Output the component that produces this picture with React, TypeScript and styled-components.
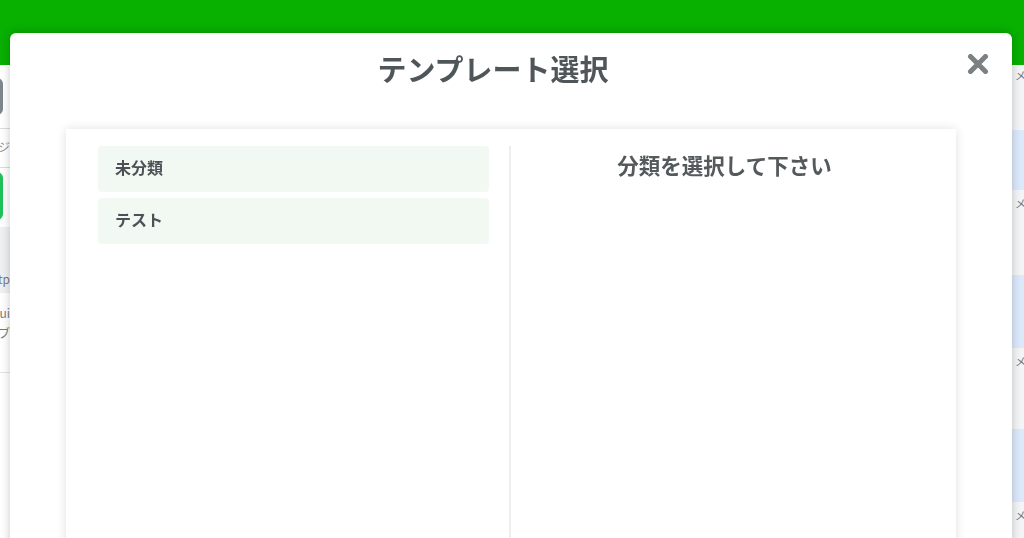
import React from 'react';
import styled, { createGlobalStyle } from 'styled-components';

const categories = ['未分類', 'テスト'];

// chat bubbles peeking out on the right of the background page
const threads = [
  { gap: 47, height: 60 },
  { gap: 64, height: 73 },
  { gap: 60, height: 73 },
  { gap: 0, height: 0 },
];

function CloseIcon() {
  return (
    <svg width="22" height="20" viewBox="0 0 22 20" aria-hidden="true">
      <path
        d="M3.5 2.5 L18.5 17.5 M18.5 2.5 L3.5 17.5"
        stroke="#7b8083"
        strokeWidth="5"
        strokeLinecap="round"
        fill="none"
      />
    </svg>
  );
}

function App() {
  return (
    <>
      <GlobalStyle />
      <StyledPage>
        <StyledHeader />
        <StyledMain>
          <StyledSidebar>
            <StyledSidebarInner>
              <StyledToolButton $color="#7b878d" $top={13} $height={37} />
              <StyledSideLabel>メッセージ</StyledSideLabel>
              <StyledToolButton $color="#20c05a" $top={4} $height={48} />
              <StyledSideRow $active>
                <span>http</span>
              </StyledSideRow>
              <StyledSideRow>
                <span>ui</span>
                <span>ブブ</span>
              </StyledSideRow>
            </StyledSidebarInner>
          </StyledSidebar>
          <StyledCenter />
          <StyledAside>
            <StyledAsideInner>
              {threads.map((t, i) => (
                <div key={i}>
                  <StyledMeta>メッセージ</StyledMeta>
                  {t.height > 0 && <StyledBubble $gap={t.gap} $height={t.height} />}
                </div>
              ))}
            </StyledAsideInner>
          </StyledAside>
        </StyledMain>
      </StyledPage>

      <StyledModal role="dialog">
        <StyledTitle>テンプレート選択</StyledTitle>
        <StyledClose type="button" aria-label="close">
          <CloseIcon />
        </StyledClose>
        <StyledCard>
          <StyledCategoryList>
            {categories.map((name) => (
              <StyledCategory key={name}>{name}</StyledCategory>
            ))}
          </StyledCategoryList>
          <StyledTemplatePane>
            <StyledPlaceholder>分類を選択して下さい</StyledPlaceholder>
          </StyledTemplatePane>
        </StyledCard>
      </StyledModal>
    </>
  );
}

const GlobalStyle = createGlobalStyle`
  html, body {
    margin: 0;
    padding: 0;
    overflow: hidden;
    background: #ffffff;
    font-family: "Noto Sans CJK JP", "Noto Sans", sans-serif;
  }
  * {
    box-sizing: border-box;
  }
`;

const StyledPage = styled.div`
  display: flex;
  flex-direction: column;
  height: 100vh;
`;

const StyledHeader = styled.header`
  height: 65px;
  flex-shrink: 0;
  background-color: #08b000;
`;

const StyledMain = styled.main`
  flex: 1;
  display: flex;
  min-height: 0;
`;

const StyledSidebar = styled.nav`
  width: 10px;
  flex-shrink: 0;
  overflow: hidden;
  background-color: #ffffff;
`;

const StyledSidebarInner = styled.div`
  width: 160px;
  margin-left: -150px;
  display: flex;
  flex-direction: column;
`;

const StyledToolButton = styled.div<{ $color: string; $top: number; $height: number }>`
  margin: ${({ $top }) => $top}px 7px 0 0;
  height: ${({ $height }) => $height}px;
  border-radius: 6px;
  background-color: ${({ $color }) => $color};
`;

const StyledSideLabel = styled.div`
  margin-top: 13px;
  height: 40px;
  line-height: 36px;
  text-align: right;
  font-size: 12px;
  color: #8a8f92;
  border-top: 1px solid #dcdcdc;
  border-bottom: 1px solid #dcdcdc;
  white-space: nowrap;
`;

const StyledSideRow = styled.div<{ $active?: boolean }>`
  margin-top: ${({ $active }) => ($active ? '7px' : '0')};
  height: ${({ $active }) => ($active ? '66px' : '80px')};
  display: flex;
  flex-direction: column;
  justify-content: ${({ $active }) => ($active ? 'flex-end' : 'flex-start')};
  align-items: flex-end;
  padding: ${({ $active }) => ($active ? '0 0 4px' : '10px 0 0')};
  font-size: 12px;
  line-height: 20px;
  color: #777c80;
  background-color: ${({ $active }) => ($active ? '#eef0f2' : '#ffffff')};
  border-bottom: ${({ $active }) => ($active ? 'none' : '1px solid #e3e3e3')};
`;

const StyledCenter = styled.section`
  flex: 1;
  background-color: #ffffff;
`;

const StyledAside = styled.aside`
  width: 12px;
  flex-shrink: 0;
  overflow: hidden;
  background-color: #f3f4f6;
`;

const StyledAsideInner = styled.div`
  width: 200px;
  padding-top: 2px;
`;

const StyledMeta = styled.div`
  height: 16px;
  padding-left: 3px;
  font-size: 11px;
  line-height: 16px;
  color: #6f7477;
  white-space: nowrap;
`;

const StyledBubble = styled.div<{ $gap: number; $height: number }>`
  margin: ${({ $gap }) => $gap}px 0 5px;
  height: ${({ $height }) => $height}px;
  background-color: #dce9fb;
`;

const StyledModal = styled.div`
  position: fixed;
  top: 33px;
  left: 10px;
  width: 1002px;
  height: 560px;
  display: flex;
  flex-direction: column;
  padding: 15px 56px 0;
  border-radius: 6px;
  background-color: #ffffff;
  box-shadow: 0 0 10px rgba(0, 0, 0, 0.22);
`;

const StyledTitle = styled.h2`
  margin: 0;
  padding-right: 36px;
  text-align: center;
  font-size: 29px;
  line-height: 40px;
  font-weight: 700;
  color: #4f5659;
`;

const StyledClose = styled.button`
  position: absolute;
  top: 21px;
  right: 23px;
  display: flex;
  padding: 0;
  border: none;
  background: none;
  cursor: pointer;
`;

const StyledCard = styled.div`
  flex: 1;
  margin-top: 41px;
  display: grid;
  grid-template-columns: 1fr 1fr;
  padding: 17px 32px;
  background-color: #ffffff;
  box-shadow: 0 0 10px rgba(0, 0, 0, 0.12);
`;

const StyledCategoryList = styled.ul`
  margin: 0;
  padding: 0 20px 0 0;
  list-style: none;
  display: flex;
  flex-direction: column;
  gap: 6px;
  border-right: 2px solid #eeeeee;
`;

const StyledCategory = styled.li`
  height: 46px;
  display: flex;
  align-items: center;
  padding: 0 17px 5px;
  border-radius: 4px;
  background-color: #f2f9f2;
  font-size: 16px;
  font-weight: 700;
  color: #4b5155;
  cursor: pointer;
`;

const StyledTemplatePane = styled.div`
  padding-left: 14px;
`;

const StyledPlaceholder = styled.p`
  margin: 4px 0 0;
  text-align: center;
  font-size: 21.5px;
  line-height: 30px;
  font-weight: 700;
  color: #54595c;
`;

export default App;
